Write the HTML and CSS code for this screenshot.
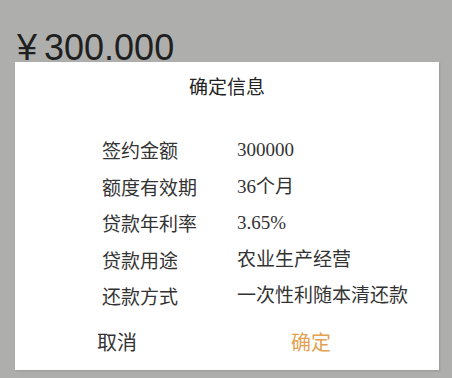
FILE: index.html
```html
<!DOCTYPE html>
<html lang="zh-CN">
<head>
    <meta charset="UTF-8">
    <meta name="viewport" content="width=device-width, initial-scale=1.0">
    <title>确定信息</title>
    <link rel="stylesheet" href="styles.css">
</head>
<body>
    <div class="page">
        <div class="amount"><span class="yen">¥</span>300.000</div>
    </div>

    <div class="dialog">
        <h2 class="dialog-title">确定信息</h2>

        <div class="info-list">
            <div class="info-row">
                <span class="info-label">签约金额</span>
                <span class="info-value">300000</span>
            </div>
            <div class="info-row">
                <span class="info-label">额度有效期</span>
                <span class="info-value">36个月</span>
            </div>
            <div class="info-row">
                <span class="info-label">贷款年利率</span>
                <span class="info-value">3.65%</span>
            </div>
            <div class="info-row">
                <span class="info-label">贷款用途</span>
                <span class="info-value">农业生产经营</span>
            </div>
            <div class="info-row">
                <span class="info-label">还款方式</span>
                <span class="info-value">一次性利随本清还款</span>
            </div>
        </div>

        <div class="actions">
            <button class="btn btn-cancel">取消</button>
            <button class="btn btn-ok">确定</button>
        </div>
    </div>
</body>
</html>
```

FILE: styles.css
```css
body {
    margin: 0;
    padding: 0;
    background-color: #aeafad;
    font-family: 'Noto Sans CJK SC', 'Liberation Sans', sans-serif;
    color: #333;
    height: 378px;
    overflow: hidden;
}
.page {
    padding: 30px 17px 0;
}
.amount {
    font-family: 'Liberation Sans', 'Noto Sans CJK SC', sans-serif;
    font-size: 36px;
    line-height: 36px;
    color: #1f1f1f;
}
.yen {
    margin-right: 7px;
}
.dialog {
    position: absolute;
    left: 15px;
    top: 62px;
    width: 424px;
    height: 308px;
    box-sizing: border-box;
    padding-top: 11px;
    background-color: #fff;
    box-shadow: 1px 1px 2px rgba(0,0,0,0.12);
}
.dialog-title {
    margin: 0;
    font-size: 19px;
    font-weight: normal;
    line-height: 26px;
    text-align: center;
    color: #222;
}
.info-list {
    margin-top: 33px;
    padding-left: 87px;
}
.info-row {
    display: grid;
    grid-template-columns: 135px auto;
    font-size: 19px;
    line-height: 36.6px;
}
.info-value {
    font-family: 'Liberation Serif', 'Noto Sans CJK SC', serif;
}
.actions {
    display: grid;
    grid-template-columns: 194px auto;
    margin-top: 7px;
    padding-left: 82px;
}
.btn {
    background: none;
    border: none;
    padding: 0;
    margin: 0;
    font-family: 'Noto Sans CJK SC', sans-serif;
    font-size: 20px;
    line-height: 40px;
    text-align: left;
    cursor: pointer;
}
.btn-cancel {
    color: #333;
}
.btn-ok {
    color: #e3a152;
}
```
